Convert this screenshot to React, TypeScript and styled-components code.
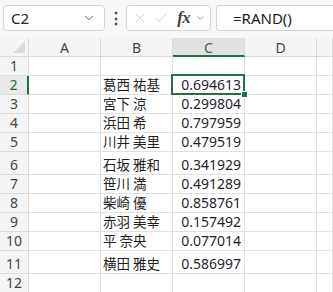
import styled, { createGlobalStyle } from 'styled-components'
import { ChevronDown, X, Check } from 'lucide-react'

interface IRow {
    name: string
    value: string
    tall?: boolean
}

const rows: IRow[] = [
    { name: '', value: '' },
    { name: '葛西 祐基', value: '0.694613' },
    { name: '宮下 涼', value: '0.299804' },
    { name: '浜田 希', value: '0.797959' },
    { name: '川井 美里', value: '0.479519' },
    { name: '石坂 雅和', value: '0.341929', tall: true },
    { name: '笹川 満', value: '0.491289' },
    { name: '柴崎 優', value: '0.858761' },
    { name: '赤羽 美幸', value: '0.157492' },
    { name: '平 奈央', value: '0.077014' },
    { name: '横田 雅史', value: '0.586997', tall: true },
    { name: '', value: '' },
]

const columns = ['A', 'B', 'C', 'D', '']

const GREEN = '#1e7145'

const App: React.FC = () => {
    return (
        <>
            <GlobalStyle />
            <Toolbar>
                <NameBox>
                    <span>C2</span>
                    <ChevronDown size={14} strokeWidth={1.5} color="#555" />
                </NameBox>
                <Dots>⋮</Dots>
                <FxBox>
                    <X size={18} strokeWidth={1.2} color="#c9c9c9" />
                    <Check size={18} strokeWidth={1.2} color="#c9c9c9" />
                    <Fx>fx</Fx>
                    <ChevronDown size={12} strokeWidth={1.5} color="#777" />
                </FxBox>
                <FormulaBox>=RAND()</FormulaBox>
            </Toolbar>
            <Sheet>
                <Corner>
                    <CornerTriangle />
                </Corner>
                {columns.map((col, i) => (
                    <ColHeader key={i} active={col === 'C'}>{col}</ColHeader>
                ))}
                {rows.map((row, i) => (
                    <Row key={i} tall={Boolean(row.tall)}>
                        <RowHeader active={i === 1}>{i + 1}</RowHeader>
                        <Cell />
                        <Cell><Name>{row.name}</Name></Cell>
                        <Cell align="right" selected={i === 1}>
                            {row.value}
                            {i === 1 && <FillHandle />}
                        </Cell>
                        <Cell />
                        <Cell />
                    </Row>
                ))}
            </Sheet>
        </>
    )
}

const GlobalStyle = createGlobalStyle`
    html, body {
        margin: 0;
        background: #ffffff;
        overflow: hidden;
    }

    body {
        font-family: "Noto Sans", "Noto Sans CJK JP", sans-serif;
        color: #222;
    }
`

const Toolbar = styled.div`
    height: 38px;
    box-sizing: border-box;
    padding: 5px 0 0 3px;
    display: flex;
    align-items: flex-start;
    background: #f8f8f8;
`

const Box = styled.div`
    height: 26px;
    box-sizing: border-box;
    border: 1px solid #d5d5d5;
    border-radius: 4px;
    background: #ffffff;
    display: flex;
    align-items: center;
`

const NameBox = styled(Box)`
    width: 102px;
    padding: 0 8px 0 7px;
    justify-content: space-between;
    font-size: 15px;
    color: #222;
`

const Dots = styled.div`
    width: 21px;
    height: 26px;
    display: flex;
    align-items: center;
    justify-content: center;
    font-size: 16px;
    font-weight: bold;
    color: #444;
`

const FxBox = styled(Box)`
    width: 85px;
    padding: 0 4px 0 5px;
    gap: 5px;
`

const Fx = styled.span`
    font-family: "Liberation Serif", serif;
    font-style: italic;
    font-weight: bold;
    font-size: 17px;
    color: #444;
    margin-left: 3px;
    letter-spacing: -0.5px;
`

const FormulaBox = styled(Box)`
    flex: 1;
    margin-left: 5px;
    border-right: none;
    border-radius: 4px 0 0 4px;
    padding-left: 16px;
    font-size: 15px;
    color: #222;
`

const Sheet = styled.div`
    display: grid;
    grid-template-columns: 29px 72px 72px 72px 72px 1fr;
    grid-template-rows: 19px;
    grid-auto-rows: auto;
    font-size: 14px;
`

const Row = styled.div<{ tall: boolean }>`
    display: contents;

    & > * {
        height: ${({ tall }) => (tall ? '23px' : '19px')};
    }
`

const HeaderCell = styled.div`
    box-sizing: border-box;
    background: #f5f5f5;
    border-right: 1px solid #dadada;
    border-bottom: 1px solid #dadada;
    display: flex;
    align-items: center;
    justify-content: center;
    color: #444;
`

const Corner = styled(HeaderCell)`
    position: relative;
`

const CornerTriangle = styled.div`
    position: absolute;
    right: 3px;
    bottom: 3px;
    width: 0;
    height: 0;
    border-left: 12px solid transparent;
    border-bottom: 12px solid #dcdcdc;
`

const ColHeader = styled(HeaderCell)<{ active: boolean }>`
    background: ${({ active }) => (active ? '#e2e2e2' : '#f5f5f5')};
    color: ${({ active }) => (active ? GREEN : '#444')};
    border-bottom: ${({ active }) => (active ? `2px solid ${GREEN}` : '1px solid #dadada')};
    padding-top: ${({ active }) => (active ? '1px' : '0')};
`

const RowHeader = styled(HeaderCell)<{ active: boolean }>`
    background: ${({ active }) => (active ? '#e9e9e9' : '#f5f5f5')};
    color: ${({ active }) => (active ? GREEN : '#444')};
    border-right: ${({ active }) => (active ? `2px solid ${GREEN}` : '1px solid #dadada')};
    align-items: flex-end;
    padding-bottom: 1px;
    line-height: 17px;
`

const Cell = styled.div<{ align?: 'left' | 'right'; selected?: boolean }>`
    position: relative;
    box-sizing: border-box;
    border-right: 1px solid #e1e1e1;
    border-bottom: 1px solid #e1e1e1;
    display: flex;
    align-items: flex-end;
    justify-content: ${({ align }) => (align === 'right' ? 'flex-end' : 'flex-start')};
    padding: 0 3px 1px 2px;
    line-height: 17px;
    white-space: nowrap;
    font-family: "Noto Sans", sans-serif;
    color: #1f1f2f;

    ${({ selected }) =>
        selected &&
        `
        &::after {
            content: "";
            position: absolute;
            top: -2px;
            left: -2px;
            right: -1px;
            bottom: -1px;
            border: 2px solid ${GREEN};
        }
    `}
`

const Name = styled.span`
    font-family: "Noto Sans CJK JP", sans-serif;
    font-size: 13.5px;
    color: #1f1f1f;
`

const FillHandle = styled.div`
    position: absolute;
    right: -4px;
    bottom: -4px;
    width: 5px;
    height: 5px;
    background: ${GREEN};
    border: 1px solid #fff;
    z-index: 2;
`

export default App
